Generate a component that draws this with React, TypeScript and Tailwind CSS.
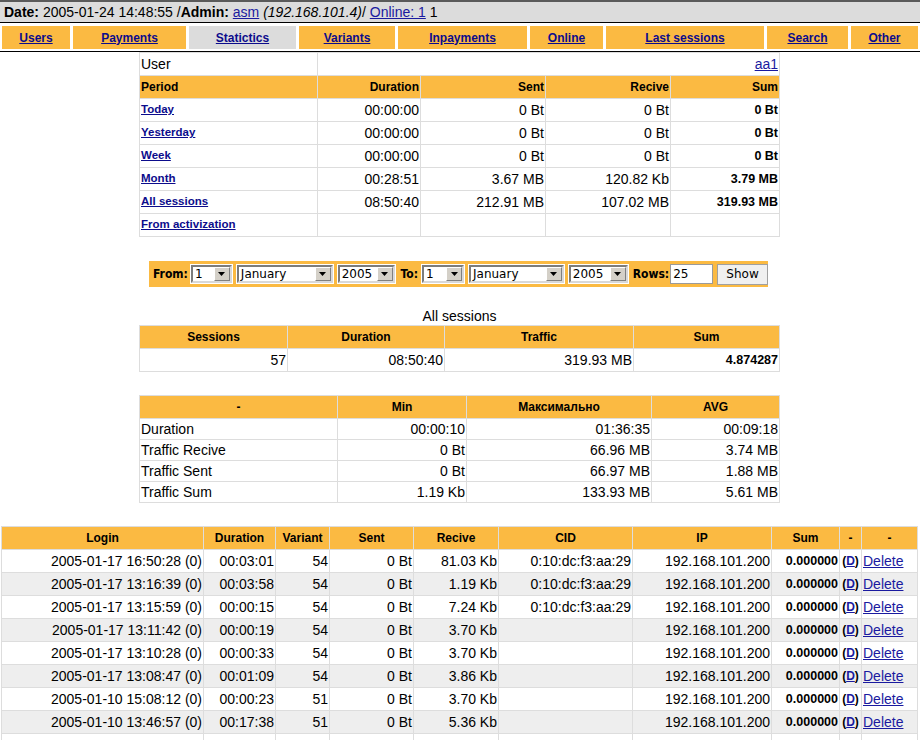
import React from 'react';

const SANS = "font-['Liberation_Sans',Arial,sans-serif]";

function Select({ value, w }: { value: string; w: string }) {
  return (
    <div className={`${w} h-[20px] bg-white p-px`}>
      <div className="w-full h-full flex border-2 border-t-[#7c7c7c] border-l-[#7c7c7c] border-r-[#d8d8d8] border-b-[#d8d8d8] bg-white">
        <div className="flex-1 pl-[2px] text-[12px] leading-[14px] font-['DejaVu_Sans',sans-serif] text-black flex items-center">{value}</div>
        <div className="w-[16px] bg-[#d4d0c8] border border-t-white border-l-white border-r-[#808080] border-b-[#808080] flex items-center justify-center">
          <svg width="7" height="4" viewBox="0 0 7 4"><polygon points="0,0 7,0 3.5,4" fill="#000" /></svg>
        </div>
      </div>
    </div>
  );
}

const navItems: [string, string, boolean][] = [
  ['Users', 'w-[68px]', false],
  ['Payments', 'w-[113px]', false],
  ['Statictics', 'w-[107px]', true],
  ['Variants', 'w-[96px]', false],
  ['Inpayments', 'w-[129px]', false],
  ['Online', 'w-[73px]', false],
  ['Last sessions', 'w-[158px]', false],
  ['Search', 'w-[81px]', false],
  ['Other', 'w-[67px]', false],
];

const t1Rows = [
  ['Today', '00:00:00', '0 Bt', '0 Bt', '0 Bt'],
  ['Yesterday', '00:00:00', '0 Bt', '0 Bt', '0 Bt'],
  ['Week', '00:00:00', '0 Bt', '0 Bt', '0 Bt'],
  ['Month', '00:28:51', '3.67 MB', '120.82 Kb', '3.79 MB'],
  ['All sessions', '08:50:40', '212.91 MB', '107.02 MB', '319.93 MB'],
  ['From activization', '', '', '', ''],
];

const t3Rows = [
  ['Duration', '00:00:10', '01:36:35', '00:09:18'],
  ['Traffic Recive', '0 Bt', '66.96 MB', '3.74 MB'],
  ['Traffic Sent', '0 Bt', '66.97 MB', '1.88 MB'],
  ['Traffic Sum', '1.19 Kb', '133.93 MB', '5.61 MB'],
];

const cid = '0:10:dc:f3:aa:29';
const t4Rows = [
  ['2005-01-17 16:50:28 (0)', '00:03:01', '54', '0 Bt', '81.03 Kb', cid],
  ['2005-01-17 13:16:39 (0)', '00:03:58', '54', '0 Bt', '1.19 Kb', cid],
  ['2005-01-17 13:15:59 (0)', '00:00:15', '54', '0 Bt', '7.24 Kb', cid],
  ['2005-01-17 13:11:42 (0)', '00:00:19', '54', '0 Bt', '3.70 Kb', ''],
  ['2005-01-17 13:10:28 (0)', '00:00:33', '54', '0 Bt', '3.70 Kb', ''],
  ['2005-01-17 13:08:47 (0)', '00:01:09', '54', '0 Bt', '3.86 Kb', ''],
  ['2005-01-10 15:08:12 (0)', '00:00:23', '51', '0 Bt', '3.70 Kb', ''],
  ['2005-01-10 13:46:57 (0)', '00:17:38', '51', '0 Bt', '5.36 Kb', ''],
];

const hd = 'h-[22px] bg-[#fbba42] flex items-center px-px text-[12px] font-bold text-black whitespace-nowrap';
const cell = 'flex items-center px-px text-[14px] text-black whitespace-nowrap';
const td = `h-[22px] ${cell}`;
const td20 = `h-[20px] ${cell}`;
const sumB = 'text-[12.5px] font-bold';
const link = 'text-[#1a1aa0] underline';

export default function App() {
  return (
    <div className={`${SANS} h-[740px] w-[920px] overflow-hidden bg-white text-black`}>
      {/* top status line */}
      <div className="h-[23px] border-t-2 border-t-[#5a5a5a] border-b border-b-black bg-[#dcdcdc] flex items-center pl-[4px] text-[14px] whitespace-nowrap">
        <b>Date:</b>&nbsp;2005-01-24 14:48:55 /<b>Admin:</b>&nbsp;<span className={link}>asm</span>&nbsp;<i>(192.168.101.4)</i>/&nbsp;<span className={link}>Online: 1</span>&nbsp;1
      </div>

      {/* nav */}
      <div className="mt-[3px] flex gap-[3px] pl-[2px]">
        {navItems.map(([label, w, active]) => (
          <div key={label} className={`${w} h-[23px] flex items-center justify-center text-[12px] font-bold ${active ? 'bg-[#dcdcdc]' : 'bg-[#fbba42]'}`}>
            <span className="text-[#0c0c8c] underline">{label}</span>
          </div>
        ))}
      </div>
      <div className="mt-[2px] h-px bg-black" />

      {/* table 1 */}
      <div className="ml-[139px] w-fit grid grid-cols-[177px_102px_124px_124px_108px] gap-px p-px bg-[#dddddd]">
        <div className={`${td} bg-white`}>User</div>
        <div className={`${td} bg-white col-span-4 justify-end`}><span className={link}>aa1</span></div>
        <div className={hd}>Period</div>
        <div className={`${hd} justify-end`}>Duration</div>
        <div className={`${hd} justify-end`}>Sent</div>
        <div className={`${hd} justify-end`}>Recive</div>
        <div className={`${hd} justify-end`}>Sum</div>
        {t1Rows.map((r) => (
          <React.Fragment key={r[0]}>
            <div className={`${td} bg-white`}><span className="text-[11.5px] font-bold text-[#0c0c8c] underline">{r[0]}</span></div>
            <div className={`${td} bg-white justify-end`}>{r[1]}</div>
            <div className={`${td} bg-white justify-end`}>{r[2]}</div>
            <div className={`${td} bg-white justify-end`}>{r[3]}</div>
            <div className={`${td} bg-white justify-end`}><span className={sumB}>{r[4]}</span></div>
          </React.Fragment>
        ))}
      </div>

      {/* filter form */}
      <div className="mt-[24px] ml-[149px] w-[619px] h-[26px] bg-[#fbba42] flex items-center pl-[4px] text-[12px]">
        <span className="font-bold font-['DejaVu_Sans_Condensed','DejaVu_Sans',sans-serif] text-[12px] mr-[2px]">From:</span>
        <Select value="1" w="w-[43px]" />
        <div className="w-[3px]" />
        <Select value="January" w="w-[98px]" />
        <div className="w-[3px]" />
        <Select value="2005" w="w-[59px]" />
        <span className="font-bold font-['DejaVu_Sans_Condensed','DejaVu_Sans',sans-serif] text-[12px] ml-[5px] mr-[3px]">To:</span>
        <Select value="1" w="w-[44px]" />
        <div className="w-[3px]" />
        <Select value="January" w="w-[97px]" />
        <div className="w-[3px]" />
        <Select value="2005" w="w-[61px]" />
        <span className="font-bold font-['DejaVu_Sans_Condensed','DejaVu_Sans',sans-serif] text-[12px] ml-[4px] mr-px">Rows:</span>
        <div className="w-[43px] h-[20px] bg-white border border-[#9a9a9a] flex items-center pl-[2px] text-[12px] font-['DejaVu_Sans',sans-serif]">25</div>
        <div className="ml-[4px] w-[51px] h-[21px] bg-[#f0f0f0] border border-[#a0a0a0] flex items-center justify-center text-[12px] font-['DejaVu_Sans',sans-serif]">Show</div>
      </div>

      {/* caption */}
      <div className="mt-[20px] ml-[139px] w-[641px] h-[18px] leading-[18px] text-center text-[14px]">All sessions</div>

      {/* table 2 */}
      <div className="ml-[139px] w-fit grid grid-cols-[147px_156px_188px_145px] gap-px p-px bg-[#dddddd]">
        {['Sessions', 'Duration', 'Traffic', 'Sum'].map((h) => (
          <div key={h} className={`${hd} justify-center`}>{h}</div>
        ))}
        <div className={`${td} bg-white justify-end`}>57</div>
        <div className={`${td} bg-white justify-end`}>08:50:40</div>
        <div className={`${td} bg-white justify-end`}>319.93 MB</div>
        <div className={`${td} bg-white justify-end`}><span className={sumB}>4.874287</span></div>
      </div>

      {/* table 3 */}
      <div className="mt-[23px] ml-[139px] w-fit grid grid-cols-[197px_128px_184px_127px] gap-px p-px bg-[#dddddd]">
        {['-', 'Min', 'Максимально', 'AVG'].map((h) => (
          <div key={h} className={`${hd} justify-center`}>{h}</div>
        ))}
        {t3Rows.map((r) => (
          <React.Fragment key={r[0]}>
            <div className={`${td20} bg-white`}>{r[0]}</div>
            <div className={`${td20} bg-white justify-end`}>{r[1]}</div>
            <div className={`${td20} bg-white justify-end`}>{r[2]}</div>
            <div className={`${td20} bg-white justify-end`}>{r[3]}</div>
          </React.Fragment>
        ))}
      </div>

      {/* table 4 */}
      <div className="mt-[23px] ml-px w-fit grid grid-cols-[201px_71px_53px_83px_84px_133px_138px_67px_21px_55px] gap-px p-px bg-[#dddddd]">
        {['Login', 'Duration', 'Variant', 'Sent', 'Recive', 'CID', 'IP', 'Sum', '-', '-'].map((h, i) => (
          <div key={i} className={`${hd} justify-center`}>{h}</div>
        ))}
        {t4Rows.map((r, i) => {
          const bg = i % 2 === 0 ? 'bg-white' : 'bg-[#eeeeee]';
          return (
            <React.Fragment key={i}>
              <div className={`${td} ${bg} justify-end`}>{r[0]}</div>
              <div className={`${td} ${bg} justify-end`}>{r[1]}</div>
              <div className={`${td} ${bg} justify-end`}>{r[2]}</div>
              <div className={`${td} ${bg} justify-end`}>{r[3]}</div>
              <div className={`${td} ${bg} justify-end`}>{r[4]}</div>
              <div className={`${td} ${bg} justify-end`}>{r[5]}</div>
              <div className={`${td} ${bg} justify-end`}>192.168.101.200</div>
              <div className={`${td} ${bg} justify-end`}><span className={sumB}>0.000000</span></div>
              <div className={`${td} ${bg} justify-center`}><span className="text-[12px] font-bold">(<span className="text-[#1a1aa0] underline">D</span>)</span></div>
              <div className={`${td} ${bg}`}><span className={link}>Delete</span></div>
            </React.Fragment>
          );
        })}
        {Array.from({ length: 10 }).map((_, i) => (
          <div key={`e${i}`} className={`${td} bg-white`} />
        ))}
      </div>
    </div>
  );
}
